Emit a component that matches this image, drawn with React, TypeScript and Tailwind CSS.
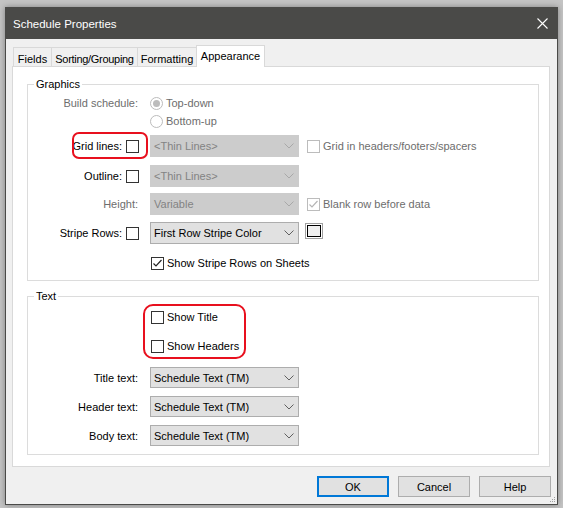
import React from "react";

const font = { fontFamily: '"Liberation Sans", Arial, sans-serif' };

function Chevron({ disabled }: { disabled?: boolean }) {
  return (
    <svg width="10" height="6" viewBox="0 0 10 6" className="shrink-0">
      <path d="M0.5 0.5 L5 5 L9.5 0.5" fill="none" stroke={disabled ? "#a8a8a8" : "#606060"} strokeWidth="1" />
    </svg>
  );
}

function Dropdown({ value, disabled, h = "h-[22px]" }: { value: string; disabled?: boolean; h?: string }) {
  return (
    <div
      className={`w-[149px] ${h} flex items-center justify-between pl-[3px] pr-[4px] border ${
        disabled ? "bg-[#cccccc] border-[#cccccc] text-[#838383]" : "bg-[#e1e1e1] border-[#adadad] text-black"
      }`}
    >
      <span>{value}</span>
      <Chevron disabled={disabled} />
    </div>
  );
}

function Check({ checked, disabled }: { checked?: boolean; disabled?: boolean }) {
  return (
    <div
      className={`w-[13px] h-[13px] shrink-0 border bg-white flex items-center justify-center ${
        disabled ? "border-[#bcbcbc]" : "border-[#333333]"
      }`}
    >
      {checked && (
        <svg width="11" height="11" viewBox="0 0 11 11">
          <path d="M1.5 5.5 L4 8 L9.5 2" fill="none" stroke={disabled ? "#b5b5b5" : "#222"} strokeWidth="1.2" />
        </svg>
      )}
    </div>
  );
}

function Radio({ checked }: { checked?: boolean }) {
  return (
    <div className="w-[13px] h-[13px] shrink-0 rounded-full border border-[#bcbcbc] bg-white flex items-center justify-center">
      {checked && <div className="w-[7px] h-[7px] rounded-full bg-[#bcbcbc]" />}
    </div>
  );
}

function Label({ text, gray }: { text: string; gray?: boolean }) {
  return <div className={`w-[111px] pr-[1px] text-right ${gray ? "text-[#6d6d6d]" : "text-black"}`}>{text}</div>;
}

function CheckLabel({ text }: { text: string }) {
  return (
    <div className="w-[111px] flex items-center justify-end gap-[4px]">
      <span>{text}</span>
      <Check />
    </div>
  );
}

function Tab({ label, active, w, tight }: { label: string; active?: boolean; w: string; tight?: boolean }) {
  return (
    <div
      className={`${w} text-center whitespace-nowrap ${tight ? "tracking-[-0.3px]" : ""} ${
        active
          ? "h-[22px] -mb-[1px] pt-[2px] bg-white border border-b-0 border-[#d9d9d9] relative z-10"
          : "h-[19px] pt-[3px] bg-[#f0f0f0] border border-b-0 border-[#d9d9d9]"
      }`}
    >
      {label}
    </div>
  );
}

function Button({ label, primary }: { label: string; primary?: boolean }) {
  return (
    <div
      className={`w-[72px] h-[21px] flex items-center justify-center bg-[#e1e1e1] ${
        primary ? "border-2 border-[#0078d7]" : "border border-[#adadad]"
      }`}
    >
      {label}
    </div>
  );
}

export default function App() {
  return (
    <div className="w-[563px] h-[508px] bg-[#c4c4c4] pt-[7px] pl-[5px] text-[11px] leading-[16px] overflow-hidden" style={font}>
      <div className="w-[553px] h-[498px] border border-[#4a4a48] bg-[#f0f0f0] flex flex-col shadow-[0_0_6px_rgba(0,0,0,0.35)] relative">
        {/* title bar */}
        <div className="h-[31px] bg-[#4a4a48] flex items-center justify-between pl-[7px] pr-[9px] text-white">
          <span className="text-[11.5px]">Schedule Properties</span>
          <svg width="11" height="11" viewBox="0 0 11 11">
            <path d="M0.5 0.5 L10.5 10.5 M10.5 0.5 L0.5 10.5" stroke="#ffffff" strokeWidth="1.1" />
          </svg>
        </div>

        <div className="flex-1 pt-[6px] pl-[6px] pr-[6px] flex flex-col">
          {/* tabs */}
          <div className="flex items-end ml-[1px] h-[21px]">
            <Tab label="Fields" w="w-[39px]" />
            <Tab label="Sorting/Grouping" w="w-[87px] -ml-[1px]" tight />
            <Tab label="Formatting" w="w-[60px] -ml-[1px]" />
            <Tab label="Appearance" w="w-[69px] -ml-[1px]" active />
          </div>

          {/* panel */}
          <div className="w-[538px] h-[401px] bg-white border border-[#d9d9d9] pt-[9px] pl-[14px] pr-[10px]">
            <fieldset className="border border-[#dcdcdc] pb-[8px]">
              <legend className="ml-[6px] px-[2px] leading-[16px]">Graphics</legend>
              <div className="flex items-center h-[18px] mt-[2px]">
                <Label text="Build schedule:" gray />
                <div className="ml-[11px] flex items-center gap-[3px] text-[#6d6d6d]">
                  <Radio checked />
                  <span>Top-down</span>
                </div>
              </div>
              <div className="flex items-center h-[18px]">
                <div className="w-[111px]" />
                <div className="ml-[11px] flex items-center gap-[3px] text-[#6d6d6d]">
                  <Radio />
                  <span>Bottom-up</span>
                </div>
              </div>
              <div className="flex items-center h-[22px] mt-[5px]">
                <CheckLabel text="Grid lines:" />
                <div className="ml-[11px]">
                  <Dropdown value="<Thin Lines>" disabled />
                </div>
                <div className="ml-[8px] flex items-center gap-[3px] text-[#6d6d6d]">
                  <Check disabled />
                  <span>Grid in headers/footers/spacers</span>
                </div>
              </div>
              <div className="flex items-center h-[22px] mt-[8px]">
                <CheckLabel text="Outline:" />
                <div className="ml-[11px]">
                  <Dropdown value="<Thin Lines>" disabled />
                </div>
              </div>
              <div className="flex items-center h-[22px] mt-[6px]">
                <Label text="Height:" gray />
                <div className="ml-[11px]">
                  <Dropdown value="Variable" disabled />
                </div>
                <div className="ml-[8px] flex items-center gap-[3px] text-[#6d6d6d]">
                  <Check checked disabled />
                  <span>Blank row before data</span>
                </div>
              </div>
              <div className="flex items-center h-[22px] mt-[7px]">
                <CheckLabel text="Stripe Rows:" />
                <div className="ml-[11px]">
                  <Dropdown value="First Row Stripe Color" />
                </div>
                <div className="ml-[6px] w-[18px] h-[16px] border border-[#a0a0a0] p-[1px] -mt-[4px]">
                  <div className="w-full h-full border border-black bg-[#f0f0f0]" />
                </div>
              </div>
              <div className="flex items-center h-[18px] mt-[10px]">
                <div className="w-[111px]" />
                <div className="ml-[12px] flex items-center gap-[3px]">
                  <Check checked />
                  <span>Show Stripe Rows on Sheets</span>
                </div>
              </div>
            </fieldset>

            <fieldset className="border border-[#dcdcdc] mt-[7px] pb-[8px]">
              <legend className="ml-[6px] px-[2px] leading-[16px]">Text</legend>
              <div className="flex items-center h-[18px] mt-[4px]">
                <div className="w-[111px]" />
                <div className="ml-[12px] flex items-center gap-[3px]">
                  <Check />
                  <span>Show Title</span>
                </div>
              </div>
              <div className="flex items-center h-[18px] mt-[11px]">
                <div className="w-[111px]" />
                <div className="ml-[12px] flex items-center gap-[3px]">
                  <Check />
                  <span>Show Headers</span>
                </div>
              </div>
              <div className="flex items-center h-[21px] mt-[12px]">
                <Label text="Title text:" />
                <div className="ml-[11px]">
                  <Dropdown value="Schedule Text (TM)" h="h-[21px]" />
                </div>
              </div>
              <div className="flex items-center h-[21px] mt-[8px]">
                <Label text="Header text:" />
                <div className="ml-[11px]">
                  <Dropdown value="Schedule Text (TM)" h="h-[21px]" />
                </div>
              </div>
              <div className="flex items-center h-[21px] mt-[8px]">
                <Label text="Body text:" />
                <div className="ml-[11px]">
                  <Dropdown value="Schedule Text (TM)" h="h-[21px]" />
                </div>
              </div>
            </fieldset>
          </div>

          {/* buttons */}
          <div className="flex justify-end gap-[9px] mt-[9px]">
            <Button label="OK" primary />
            <Button label="Cancel" />
            <Button label="Help" />
          </div>
        </div>

        {/* resize grip */}
        <svg width="7" height="7" viewBox="0 0 7 7" className="absolute right-[1px] bottom-[1px]">
          <rect x="5" y="1" width="1" height="1" fill="#a0a0a0" />
          <rect x="3" y="3" width="1" height="1" fill="#a0a0a0" />
          <rect x="5" y="3" width="1" height="1" fill="#a0a0a0" />
          <rect x="1" y="5" width="1" height="1" fill="#a0a0a0" />
          <rect x="3" y="5" width="1" height="1" fill="#a0a0a0" />
          <rect x="5" y="5" width="1" height="1" fill="#a0a0a0" />
        </svg>

        {/* red annotation marks */}
        <div className="absolute left-[66px] top-[124px] w-[76px] h-[27px] border-[2.5px] border-[#e8101e] rounded-[7px]" />
        <div className="absolute left-[137px] top-[296px] w-[103px] h-[55px] border-[2.5px] border-[#e8101e] rounded-[10px]" />
      </div>
    </div>
  );
}
